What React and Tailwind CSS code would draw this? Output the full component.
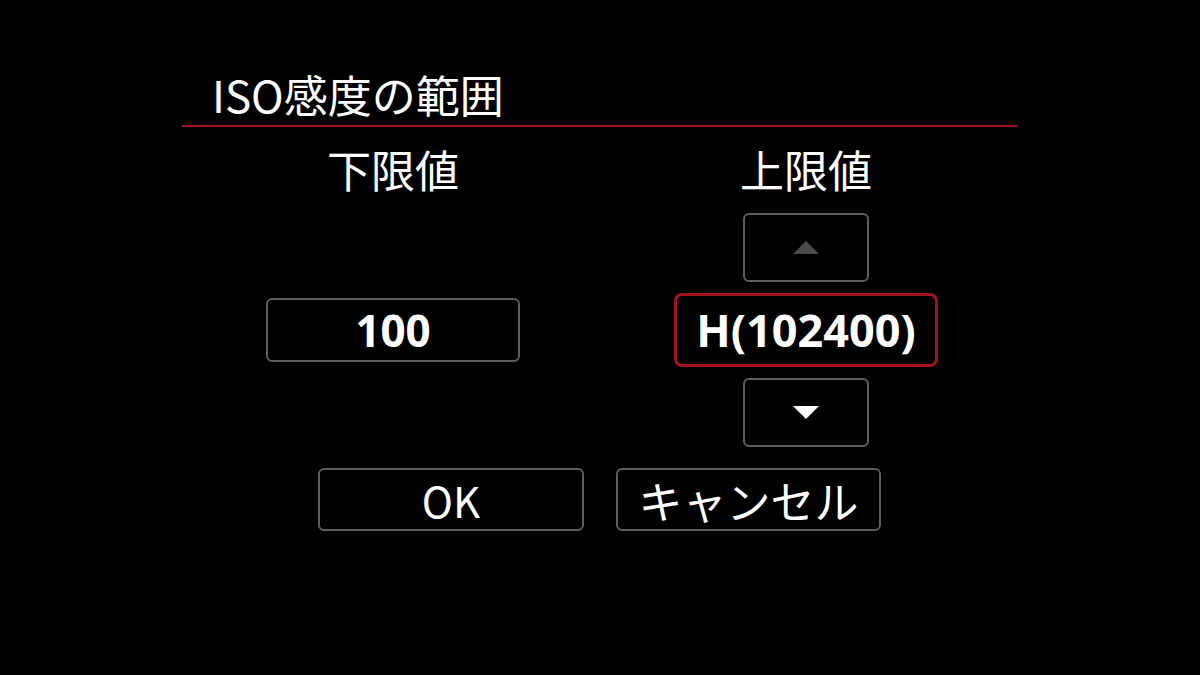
import React from "react";

const jp = { fontFamily: '"Noto Sans CJK JP", "Noto Sans", sans-serif' };
const num = { fontFamily: '"Noto Sans", "Noto Sans CJK JP", sans-serif' };

function Arrow({ up, disabled }) {
  return (
    <svg width="26" height="13" viewBox="0 0 26 13">
      <polygon
        points={up ? "13,0 26,13 0,13" : "0,0 26,0 13,13"}
        fill={disabled ? "#4a4a4a" : "#ffffff"}
      />
    </svg>
  );
}

function StepButton({ up, disabled }) {
  return (
    <div className="w-[126px] h-[69px] border-2 border-[#5e5e5e] rounded-[6px] flex items-center justify-center">
      <Arrow up={up} disabled={disabled} />
    </div>
  );
}

function ActionButton({ children, className }) {
  return (
    <div
      className={`h-[63px] border-2 border-[#5e5e5e] rounded-[6px] flex items-center justify-center text-white ${className}`}
      style={jp}
    >
      {children}
    </div>
  );
}

export default function App() {
  return (
    <div className="bg-black w-full h-[675px] overflow-hidden select-none">
      <div className="w-[835px] ml-[182px] pt-[71px]">
        <h1
          className="text-white text-[44px] leading-[46px] font-normal pl-[30px] h-[46px]"
          style={jp}
        >
          ISO感度の範囲
        </h1>
        <div className="mt-[8px] h-[2px] bg-[#a3121f]" />

        <div className="grid grid-cols-[422px_404px] mt-[20px]">
          <div
            className="text-white text-[44px] leading-[44px] font-normal text-center"
            style={jp}
          >
            下限値
          </div>
          <div
            className="text-white text-[44px] leading-[44px] font-normal text-center"
            style={jp}
          >
            上限値
          </div>

          <div />
          <div className="flex justify-center mt-[22px]">
            <StepButton up disabled />
          </div>

          <div className="flex items-center justify-center h-[74px] mt-[11px]">
            <div
              className="w-[254px] h-[64px] border-2 border-[#5e5e5e] rounded-[6px] flex items-center justify-center text-white text-[44px] font-bold"
              style={num}
            >
              100
            </div>
          </div>
          <div className="flex items-center justify-center h-[74px] mt-[11px]">
            <div
              className="w-[264px] h-[74px] border-[3px] border-[#a3121f] rounded-[8px] flex items-center justify-center text-white text-[45px] font-bold"
              style={num}
            >
              H(102400)
            </div>
          </div>

          <div />
          <div className="flex justify-center mt-[11px]">
            <StepButton />
          </div>
        </div>

        <div className="flex gap-[32px] mt-[21px] pl-[136px]">
          <ActionButton className="w-[266px] text-[42px]">OK</ActionButton>
          <ActionButton className="w-[265px] text-[44px]">キャンセル</ActionButton>
        </div>
      </div>
    </div>
  );
}
